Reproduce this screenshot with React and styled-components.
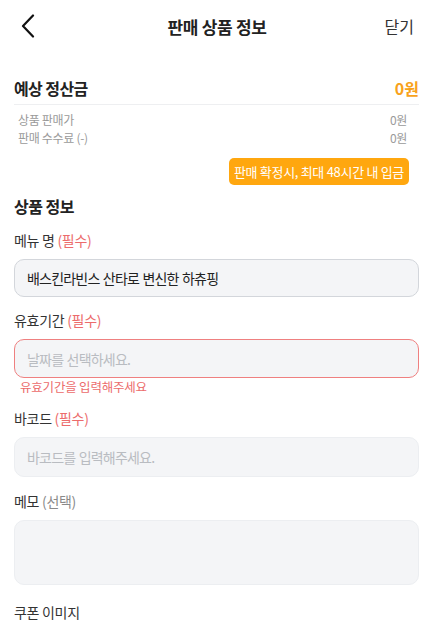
import styled, { createGlobalStyle } from "styled-components";

const Global = createGlobalStyle`
	body {
		margin: 0;
		background: #ffffff;
		font-family: "Noto Sans CJK KR", "Noto Sans", sans-serif;
		color: #222;
	}
`;

const Page = styled.div`
	width: 434px;
	height: 642px;
	overflow: hidden;
	background: #fff;
`;

const Header = styled.div`
	height: 52px;
	display: grid;
	grid-template-columns: 60px 1fr 60px;
	align-items: center;
`;
const Back = styled.button`
	border: none;
	background: none;
	padding: 0 0 0 21px;
	display: flex;
	align-items: center;
	height: 100%;
`;
const HeaderTitle = styled.div`
	text-align: center;
	font-size: 17px;
	font-weight: 700;
	letter-spacing: -0.3px;
	color: #222;
`;
const Close = styled.div`
	text-align: right;
	padding-right: 20px;
	font-size: 16px;
	color: #333;
`;

const Body = styled.div`
	padding: 0 15px 0 14px;
`;

const SumRow = styled.div`
	display: flex;
	justify-content: space-between;
	align-items: center;
	margin-top: 22px;
	height: 28px;
	padding-bottom: 2px;
	border-bottom: 1px solid #eeeff1;
`;
const SumTitle = styled.div`
	font-size: 16px;
	font-weight: 700;
	letter-spacing: -0.6px;
	color: #222;
`;
const SumValue = styled.div`
	font-size: 16px;
	font-weight: 700;
	color: #f8a21b;
`;

const Details = styled.div`
	padding: 6px 12px 0 4px;
`;
const DetailRow = styled.div`
	display: flex;
	justify-content: space-between;
	font-size: 12px;
	line-height: 18px;
	letter-spacing: -0.3px;
	color: #9a9a9a;
`;

const BadgeWrap = styled.div`
	display: flex;
	justify-content: flex-end;
	padding-right: 10px;
	margin-top: 11px;
`;
const Badge = styled.div`
	background: #ffa70f;
	color: #fff;
	font-size: 13px;
	letter-spacing: -0.3px;
	height: 27px;
	line-height: 27px;
	padding: 0 5px;
	border-radius: 5px;
`;

const SectionTitle = styled.div`
	font-size: 16px;
	font-weight: 700;
	letter-spacing: -0.5px;
	color: #222;
	margin-top: 9px;
	line-height: 24px;
`;

const Field = styled.div`
	margin-top: ${(p) => p.$gap}px;
`;
const Label = styled.div`
	font-size: 14px;
	line-height: 20px;
	letter-spacing: -0.3px;
	color: #333;
`;
const Required = styled.span`
	color: #ec6b6b;
`;
const Optional = styled.span`
	color: #8a8a8a;
`;
const Input = styled.div`
	margin-top: 9px;
	height: ${(p) => p.$h || 38}px;
	box-sizing: border-box;
	background: #f4f5f7;
	border: 1px solid ${(p) => p.$border};
	border-radius: 10px;
	padding: 0 12px;
	display: flex;
	align-items: ${(p) => (p.$top ? "flex-start" : "center")};
	font-size: 14px;
	letter-spacing: -0.8px;
	word-spacing: 1px;
	color: ${(p) => (p.$placeholder ? "#b9bcc1" : "#222")};
`;
const ErrorText = styled.div`
	font-size: 12.5px;
	line-height: 16px;
	letter-spacing: -0.2px;
	color: #ec6b6b;
	padding-left: 6px;
	margin-top: 1px;
`;

export default function App() {
	return (
		<Page>
			<Global />
			<Header>
				<Back aria-label="back">
					<svg width="14" height="24" viewBox="0 0 14 24">
						<path d="M12 1.5 L2 12 L12 22.5" fill="none" stroke="#111" strokeWidth="2.2" strokeLinecap="round" strokeLinejoin="round" />
					</svg>
				</Back>
				<HeaderTitle>판매 상품 정보</HeaderTitle>
				<Close>닫기</Close>
			</Header>
			<Body>
				<SumRow>
					<SumTitle>예상 정산금</SumTitle>
					<SumValue>0원</SumValue>
				</SumRow>
				<Details>
					<DetailRow><span>상품 판매가</span><span>0원</span></DetailRow>
					<DetailRow><span>판매 수수료 (-)</span><span>0원</span></DetailRow>
				</Details>
				<BadgeWrap>
					<Badge>판매 확정시, 최대 48시간 내 입금</Badge>
				</BadgeWrap>
				<SectionTitle>상품 정보</SectionTitle>
				<Field $gap={12}>
					<Label>메뉴 명 <Required>(필수)</Required></Label>
					<Input $border="#d3d6db">배스킨라빈스 산타로 변신한 하츄핑</Input>
				</Field>
				<Field $gap={13}>
					<Label>유효기간 <Required>(필수)</Required></Label>
					<Input $border="#ef8080" $h={39} $placeholder>날짜를 선택하세요.</Input>
					<ErrorText>유효기간을 입력해주세요</ErrorText>
				</Field>
				<Field $gap={13}>
					<Label>바코드 <Required>(필수)</Required></Label>
					<Input $border="#eceef1" $h={40} $placeholder>바코드를 입력해주세요.</Input>
				</Field>
				<Field $gap={14}>
					<Label>메모 <Optional>(선택)</Optional></Label>
					<Input $border="#eceef1" $h={65} $top />
				</Field>
				<Field $gap={17}>
					<Label>쿠폰 이미지</Label>
				</Field>
			</Body>
		</Page>
	);
}
